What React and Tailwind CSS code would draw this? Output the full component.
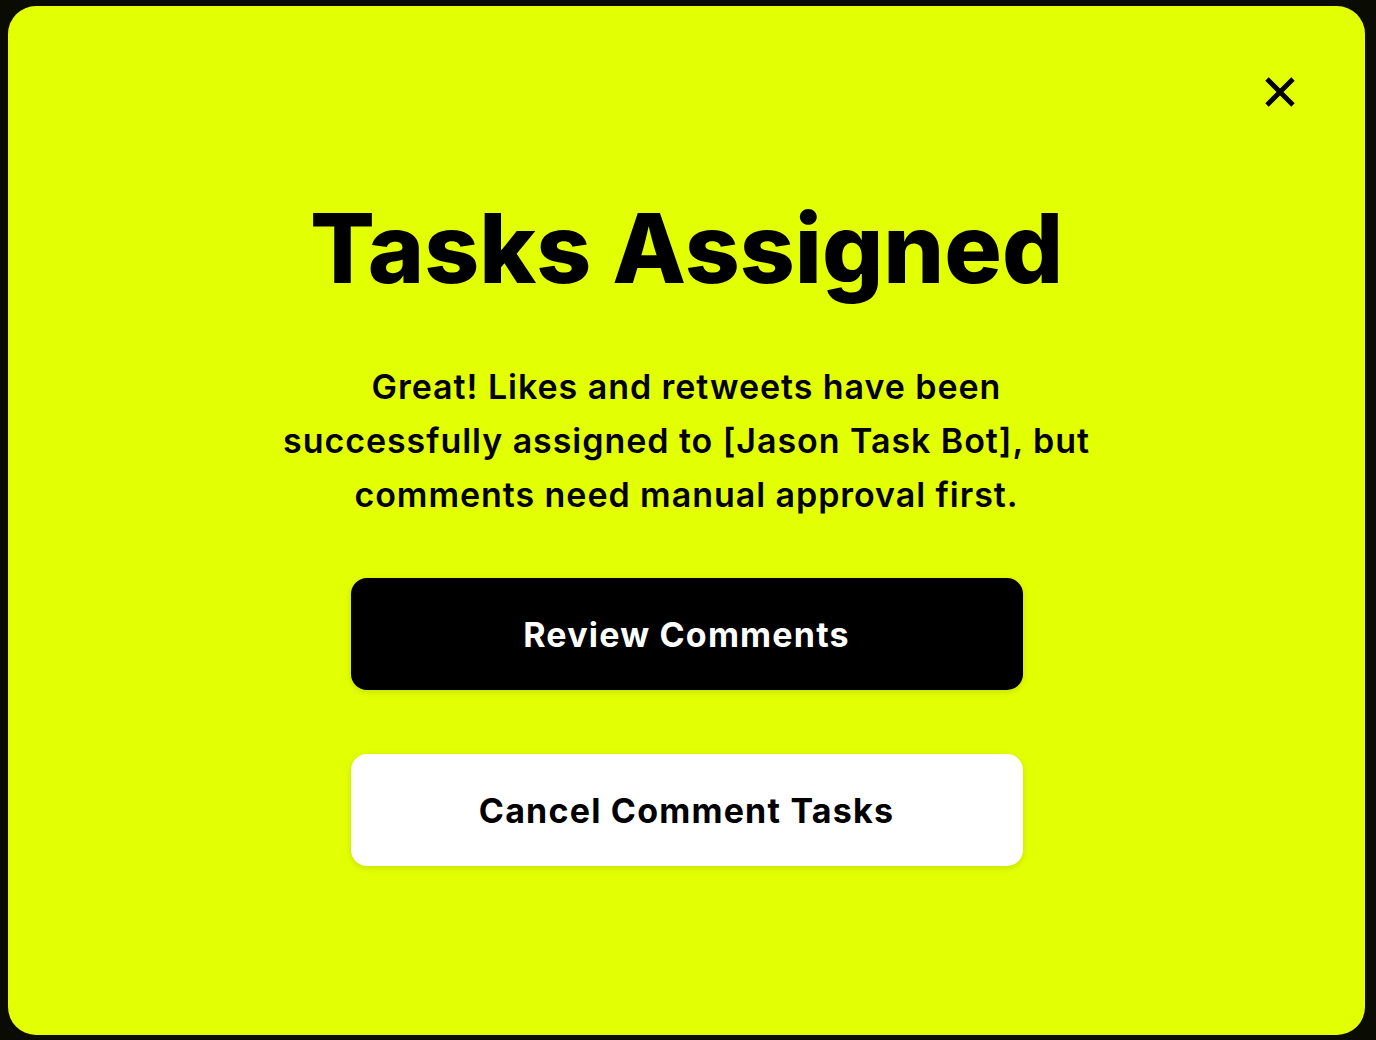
import { useState } from "react";

const font = { fontFamily: "Inter, 'Noto Sans', sans-serif" };

export default function App() {
  const [open, setOpen] = useState(true);

  return (
    <div className="w-[1376px] h-[1040px] bg-[#0a0c03] pt-[6px] pl-[8px] pr-[11px] pb-[5px]" style={font}>
      <div className="relative h-full w-full rounded-[28px] bg-[#e2ff03] flex flex-col items-center pt-[194px]">
        {/* Close */}
        <button
          onClick={() => setOpen(!open)}
          className="absolute top-[70px] right-[69px] w-[32px] h-[32px] flex items-center justify-center"
          aria-label="Close"
        >
          <svg width="32" height="32" viewBox="0 0 32 32">
            <path d="M3 3 L29 29 M29 3 L3 29" stroke="#000" strokeWidth="4.8" fill="none" />
          </svg>
        </button>

        <h1 className="text-[96px] leading-none font-extrabold text-black">
          Tasks Assigned
        </h1>

        <p className="mt-[64px] text-center text-[34px] leading-[54px] font-semibold text-black tracking-[0.95px]">
          Great! Likes and retweets have been
          <br />
          successfully assigned to [Jason Task Bot], but
          <br />
          comments need manual approval first.
        </p>

        <button className="mt-[56px] w-[672px] h-[112px] rounded-[16px] bg-black text-white text-[34px] font-bold tracking-[1.2px] shadow-[0_2px_6px_rgba(0,0,0,0.12)]">
          Review Comments
        </button>

        <button className="mt-[64px] w-[672px] h-[112px] rounded-[16px] bg-white text-black text-[34px] font-bold tracking-[1.2px] shadow-[0_2px_6px_rgba(0,0,0,0.12)]">
          Cancel Comment Tasks
        </button>
      </div>
    </div>
  );
}
